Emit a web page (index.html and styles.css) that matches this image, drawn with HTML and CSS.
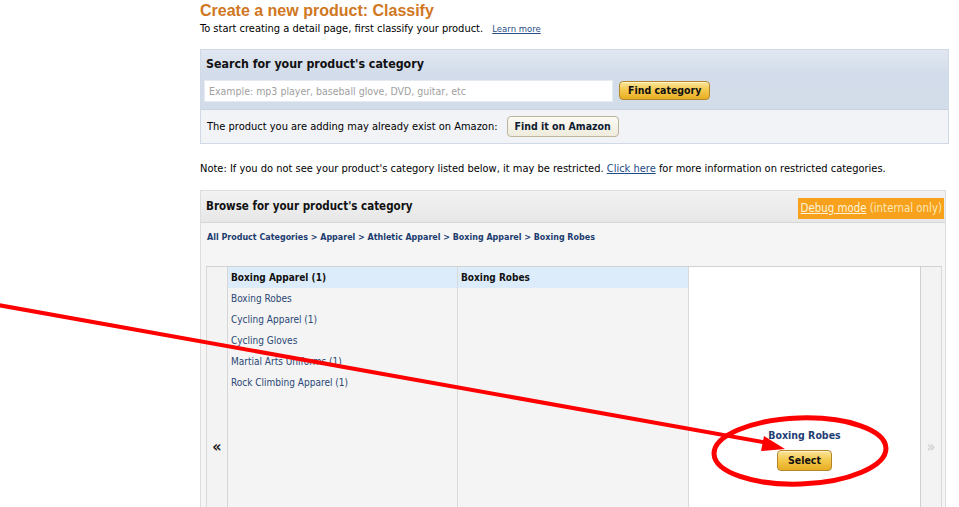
FILE: index.html
```html
<!DOCTYPE html>
<html>
<head>
<meta charset="utf-8">
<link rel="stylesheet" href="styles.css">
</head>
<body>
<div class="page">
  <h1 class="title">Create a new product: Classify</h1>
  <p class="sub">To start creating a detail page, first classify your product. <a class="learn" href="#">Learn more</a></p>

  <div class="search-box">
    <div class="search-head">
      <div class="box-title search-title">Search for your product's category</div>
      <div class="search-row">
        <div class="input">Example: mp3 player, baseball glove, DVD, guitar, etc</div>
        <span class="btn btn-gold">Find category</span>
      </div>
    </div>
    <div class="exist-row">
      <span>The product you are adding may already exist on Amazon:</span>
      <span class="btn btn-light">Find it on Amazon</span>
    </div>
  </div>

  <p class="note">Note: If you do not see your product's category listed below, it may be restricted. <a class="link" href="#">Click here</a> for more information on restricted categories.</p>

  <div class="browse-box">
    <div class="browse-head">
      <div class="box-title browse-title">Browse for your product's category</div>
      <div class="debug"><a href="#">Debug mode</a> (internal only)</div>
    </div>
    <div class="crumbs">All Product Categories &gt; Apparel &gt; Athletic Apparel &gt; Boxing Apparel &gt; Boxing Robes</div>
    <div class="browser">
      <div class="nav nav-left"><span>&laquo;</span></div>
      <div class="col col-1">
        <div class="col-head">Boxing Apparel (1)</div>
        <div class="item">Boxing Robes</div>
        <div class="item">Cycling Apparel (1)</div>
        <div class="item">Cycling Gloves</div>
        <div class="item">Martial Arts Uniforms (1)</div>
        <div class="item">Rock Climbing Apparel (1)</div>
      </div>
      <div class="col col-2">
        <div class="col-head">Boxing Robes</div>
      </div>
      <div class="col col-sel">
        <div class="sel-name">Boxing Robes</div>
        <span class="btn btn-gold btn-select">Select</span>
      </div>
      <div class="nav nav-right"><span>&raquo;</span></div>
    </div>
  </div>
</div>

<svg class="annot" width="959" height="507" viewBox="0 0 959 507">
  <line x1="-2" y1="305" x2="768" y2="443" stroke="#ff0000" stroke-width="4"/>
  <polygon points="785,449 764,436 761,451" fill="#ff0000"/>
  <ellipse cx="800" cy="451" rx="86" ry="33" fill="none" stroke="#ff0000" stroke-width="5" transform="rotate(-2 800 451)"/>
</svg>
</body>
</html>
```

FILE: styles.css
```css
html, body {
  margin: 0;
  padding: 0;
  overflow: hidden;
  background: #ffffff;
  height: 507px;
}
body {
  font-family: "DejaVu Sans Condensed", "DejaVu Sans", sans-serif;
  color: #000;
  position: relative;
}
.page {
  padding-left: 200px;
  width: 749px;
}
.title {
  margin: 0;
  padding-top: 2px;
  font-family: "Liberation Sans", Arial, sans-serif;
  font-weight: bold;
  font-size: 16px;
  line-height: 18px;
  color: #d0771f;
}
.sub {
  margin: 2px 0 0 0;
  font-size: 11px;
  line-height: 14px;
}
.learn {
  font-family: "DejaVu Sans", sans-serif;
  font-size: 8.5px;
  color: #2a4f86;
  margin-left: 6px;
}
.search-box {
  margin-top: 13px;
  border: 1px solid #d0d9e5;
  width: 749px;
  box-sizing: border-box;
}
.search-head {
  background: linear-gradient(#e2e8f1, #d2dcea 40%, #d3ddea);
  height: 59px;
  box-sizing: border-box;
  padding: 7px 5px 0 3px;
}
.box-title {
  font-weight: bold;
  line-height: 15px;
  color: #111;
}
.search-title {
  font-size: 12.3px;
  padding-left: 2px;
}
.browse-title {
  font-size: 11.5px;
}
.search-row {
  display: flex;
  align-items: flex-start;
  gap: 6px;
  margin-top: 8px;
}
.input {
  width: 409px;
  height: 22px;
  box-sizing: border-box;
  background: #fff;
  border: 1px solid #e6ebf2;
  color: #a0a0a0;
  font-size: 10.5px;
  line-height: 20px;
  padding-left: 4px;
}
.btn {
  display: inline-block;
  font-weight: bold;
  font-size: 10.5px;
  line-height: 15px;
  color: #111;
  border-radius: 4px;
  padding: 1px 8px;
}
.search-row .btn {
  margin-top: 1px;
}
.btn-gold {
  background: linear-gradient(#fbe49a, #f3c84a 50%, #e8ad24);
  border: 1px solid #b3862a;
  box-shadow: inset 0 1px 0 #fff4c8;
}
.btn-light {
  background: linear-gradient(#fbfaf4, #efecdc);
  border: 1px solid #bab59c;
  padding: 2px 7px;
  color: #0d1b33;
}
.exist-row {
  display: flex;
  align-items: center;
  gap: 9px;
  height: 34px;
  box-sizing: border-box;
  background: #f1f3f7;
  border-top: 1px solid #c7d2e0;
  padding-left: 6px;
  font-size: 11px;
}
.note {
  margin: 18px 0 0 0;
  font-size: 11px;
  line-height: 14px;
}
.link {
  color: #1f4a87;
}
.browse-box {
  margin-top: 14px;
  width: 746px;
  border: 1px solid #dedede;
  border-bottom: none;
  background: #f5f5f5;
  height: 317px;
  box-sizing: border-box;
  display: flex;
  flex-direction: column;
}
.browse-head {
  display: flex;
  justify-content: space-between;
  align-items: center;
  height: 32px;
  flex: none;
  box-sizing: border-box;
  padding: 0 1px 0 5px;
  background: linear-gradient(#f2f2f2, #e7e7e7);
  border-bottom: 1px solid #d6d6d6;
}
.debug {
  background: #f7a11c;
  color: #fde7b8;
  font-size: 11.4px;
  line-height: 21px;
  padding: 0 2px 0 2px;
  margin-top: 4px;
}
.debug a {
  color: #fff3da;
}
.crumbs {
  padding: 9px 0 0 6px;
  font-size: 8.9px;
  font-weight: bold;
  color: #1c3c6f;
  line-height: 11px;
  height: 34px;
  flex: none;
}
.browser {
  display: flex;
  margin-left: 5px;
  width: 736px;
  flex: 1;
  border-top: 1px solid #d2d2d2;
}
.nav {
  width: 22px;
  flex: none;
  display: flex;
  align-items: flex-start;
  justify-content: center;
  font-size: 16px;
  line-height: 15px;
  background: #f3f3f3;
  padding-top: 172px;
  box-sizing: border-box;
}
.nav-left {
  border-left: 1px solid #d9d9d9;
  border-right: 1px solid #d6d6d6;
  color: #222;
  font-weight: bold;
}
.nav-right {
  border-left: 1px solid #cfcfcf;
  border-right: 1px solid #d9d9d9;
  color: #cccccc;
}
.col {
  flex: none;
  background: #f4f4f4;
  border-right: 1px solid #d9d9d9;
  box-sizing: border-box;
}
.col-1 {
  width: 230px;
}
.col-2 {
  width: 231px;
}
.col-head {
  background: #dcecfa;
  height: 21px;
  padding-left: 3px;
  font-size: 10px;
  font-weight: bold;
  line-height: 21px;
  color: #111;
}
.item {
  padding-left: 3px;
  font-size: 10px;
  line-height: 21px;
  color: #2a4774;
}
.col-sel {
  width: 231px;
  background: #fff;
  border-right: none;
  display: flex;
  flex-direction: column;
  align-items: center;
  padding-top: 161px;
}
.sel-name {
  font-size: 10.5px;
  font-weight: bold;
  color: #1f3e73;
  line-height: 14px;
  margin-bottom: 8px;
}
.btn-select {
  padding: 2px 10px;
}
.annot {
  position: absolute;
  left: 0;
  top: 0;
  pointer-events: none;
}
```
